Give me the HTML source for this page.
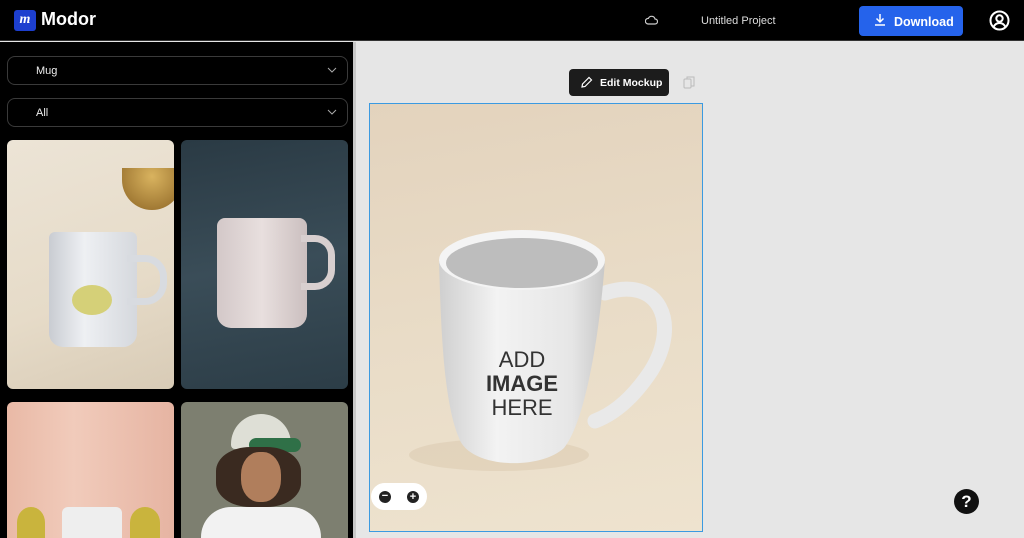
<!DOCTYPE html>
<html style="background:#e6e6e6;overflow:hidden;height:538px"><head><meta charset="utf-8"><style>
*{margin:0;padding:0;box-sizing:border-box}
body{width:1024px;height:538px;overflow:hidden;background:#e6e6e6;font-family:"Liberation Sans",sans-serif;position:relative}
.hdr{position:absolute;left:0;top:0;width:1024px;height:41px;background:#000;border-bottom:1px solid #333}
.side{position:absolute;left:0;top:42px;width:353px;height:496px;background:#000;overflow:hidden}
.strip{position:absolute;left:353px;top:42px;width:3px;height:496px;background:#c8c8c8}
.sel{position:absolute;left:7px;width:341px;height:29px;border:1px solid #3a3a3a;border-radius:8px;color:#eee;font-size:11px;padding:8px 0 0 28px}
.sel svg{position:absolute;right:10px;top:10px}
.t{position:absolute;border-radius:6px;overflow:hidden}
</style></head><body>
<div class="hdr">
 <div style="position:absolute;left:14px;top:10px;width:22px;height:21px;background:#1d3fcf;border-radius:3px;color:#fff;font:italic bold 14px 'Liberation Serif',serif;text-align:center;line-height:19px">m</div>
 <div style="position:absolute;left:41px;top:9px;color:#fff;font-size:18px;font-weight:bold">Modor</div>
 <svg style="position:absolute;left:645px;top:15px" width="13" height="10" viewBox="0 0 13 10"><path d="M3 9h7a2.5 2.5 0 0 0 0-5 3.5 3.5 0 0 0-6.6-.6A2.8 2.8 0 0 0 3 9z" fill="none" stroke="#ccc" stroke-width="1.2"/></svg>
 <div style="position:absolute;left:701px;top:15px;color:#ddd;font-size:11px">Untitled Project</div>
 <div style="position:absolute;left:859px;top:6px;width:104px;height:30px;background:#2563eb;border-radius:4px;color:#fff;font-size:12.5px;font-weight:bold;padding:9px 0 0 35px">Download</div>
 <svg style="position:absolute;left:874px;top:13px" width="12" height="13" viewBox="0 0 12 13"><path d="M6 1v8M2.5 5.5 6 9l3.5-3.5M1 12h10" fill="none" stroke="#fff" stroke-width="1.5"/></svg>
 <svg style="position:absolute;left:989px;top:10px" width="21" height="21" viewBox="0 0 21 21"><circle cx="10.5" cy="10.5" r="9" fill="none" stroke="#fff" stroke-width="2"/><circle cx="10.5" cy="8.5" r="3.2" fill="none" stroke="#fff" stroke-width="2"/><path d="M4.5 17c1.5-3 3.5-4 6-4s4.5 1 6 4" fill="none" stroke="#fff" stroke-width="2"/></svg>
</div>
<div class="side">
 <div class="sel" style="top:14px">Mug<svg width="10" height="6"><path d="M1 1l4 4 4-4" fill="none" stroke="#aaa"/></svg></div>
 <div class="sel" style="top:56px">All<svg width="10" height="6"><path d="M1 1l4 4 4-4" fill="none" stroke="#aaa"/></svg></div>
 <div class="t" style="left:7px;top:98px;width:167px;height:249px;background:linear-gradient(160deg,#ece4d6,#e6dbc8 60%,#d8cbb6)">
  <div style="position:absolute;left:115px;top:28px;width:60px;height:42px;border-radius:0 0 30px 30px;background:radial-gradient(circle at 50% 20%,#d9b35f,#8c6424)"></div>
  <div style="position:absolute;left:42px;top:92px;width:88px;height:115px;background:linear-gradient(90deg,#c9ccd2,#eef0f3 40%,#d5d8dd);border-radius:6px 6px 14px 14px"></div>
  <div style="position:absolute;left:120px;top:115px;width:40px;height:50px;border:7px solid #d8dbe0;border-radius:0 22px 22px 0;border-left:none"></div>
  <div style="position:absolute;left:65px;top:145px;width:40px;height:30px;background:#d5d078;border-radius:50%"></div>
 </div>
 <div class="t" style="left:181px;top:98px;width:167px;height:249px;background:linear-gradient(170deg,#2a3a44,#3a4d58 50%,#2c3d47)">
  <div style="position:absolute;left:36px;top:78px;width:90px;height:110px;background:linear-gradient(90deg,#d3c8c8,#e8dfde 50%,#cbbfbf);border-radius:8px 8px 14px 14px"></div>
  <div style="position:absolute;left:120px;top:95px;width:34px;height:55px;border:7px solid #d8cfcf;border-radius:0 20px 20px 0;border-left:none"></div>
 </div>
 <div class="t" style="left:7px;top:360px;width:167px;height:136px;border-radius:6px 6px 0 0;background:linear-gradient(90deg,#e9b9a6,#f1cbbb 40%,#e6b4a2)">
  <div style="position:absolute;left:55px;top:105px;width:60px;height:31px;background:#eee;border-radius:6px 6px 0 0"></div>
  <div style="position:absolute;left:10px;top:105px;width:28px;height:31px;background:#c9b43d;border-radius:50% 50% 0 0"></div>
  <div style="position:absolute;left:123px;top:105px;width:30px;height:31px;background:#c9b43d;border-radius:50% 50% 0 0"></div>
 </div>
 <div class="t" style="left:181px;top:360px;width:167px;height:136px;border-radius:6px 6px 0 0;background:#7d7f70">
  <div style="position:absolute;left:50px;top:12px;width:60px;height:35px;background:#dedfd6;border-radius:30px 30px 4px 4px"></div>
  <div style="position:absolute;left:68px;top:36px;width:52px;height:14px;background:#2f7047;border-radius:10px"></div>
  <div style="position:absolute;left:35px;top:45px;width:85px;height:60px;background:#3a2a20;border-radius:40%"></div>
  <div style="position:absolute;left:60px;top:50px;width:40px;height:50px;background:#b07e5c;border-radius:45%"></div>
  <div style="position:absolute;left:20px;top:105px;width:120px;height:31px;background:#f2f2f2;border-radius:30px 30px 0 0"></div>
 </div>
</div>
<div class="strip"></div>
<div style="position:absolute;left:569px;top:69px;width:100px;height:27px;background:#1c1c1c;border-radius:4px;color:#fff;font-size:10.5px;font-weight:bold;padding:8px 0 0 31px">Edit Mockup</div>
<svg style="position:absolute;left:580px;top:76px" width="13" height="13" viewBox="0 0 13 13"><path d="M2 11l.5-3L9 1.5l2.5 2.5L5 10.5z" fill="none" stroke="#fff" stroke-width="1.2"/></svg>
<svg style="position:absolute;left:683px;top:76px" width="12" height="14" viewBox="0 0 12 14"><rect x="1" y="3" width="7" height="9" rx="1" fill="none" stroke="#bbb"/><path d="M4 3V1h7v9H8" fill="none" stroke="#bbb"/></svg>
<svg style="position:absolute;left:625px;top:100px" width="70" height="70"><path d="M63 61 L12 13" stroke="#e8121b" stroke-width="3"/><path d="M5 6 L22 12 L12 22z" fill="#e8121b"/></svg>
<div style="position:absolute;left:369px;top:103px;width:334px;height:429px;border:1.5px solid #3b9ae1;overflow:hidden;background:linear-gradient(170deg,#e3d3bd,#e9dcc7 50%,#eee3cf)">
<svg width="334" height="429" style="position:absolute;left:-1px;top:-1px">
 <defs><linearGradient id="mb" x1="0" x2="1"><stop offset="0" stop-color="#cfcfcf"/><stop offset=".35" stop-color="#f3f3f3"/><stop offset=".8" stop-color="#e6e6e6"/><stop offset="1" stop-color="#c8c8c8"/></linearGradient></defs>
 <ellipse cx="130" cy="352" rx="90" ry="16" fill="#cdb89a" opacity=".3"/>
 <path d="M236 190 C290 172 312 220 282 268 C262 298 242 312 226 318" fill="none" stroke="#e9e9e9" stroke-width="15" stroke-linecap="round"/>
 <path d="M70 157 C72 230 75 300 90 335 C100 365 170 368 195 345 C215 320 230 240 236 157z" fill="url(#mb)"/>
 <ellipse cx="153" cy="157" rx="83" ry="30" fill="#f4f4f4"/>
 <ellipse cx="153" cy="160" rx="76" ry="25" fill="#bdbdbd"/>
 <text x="153" y="264" text-anchor="middle" font-family="Liberation Sans" font-size="22" fill="#333">ADD</text>
 <text x="153" y="288" text-anchor="middle" font-family="Liberation Sans" font-weight="bold" font-size="22" fill="#333">IMAGE</text>
 <text x="153" y="312" text-anchor="middle" font-family="Liberation Sans" font-size="22" fill="#333">HERE</text>
</svg>
<div style="position:absolute;left:1px;top:379px;width:56px;height:27px;background:#fff;border-radius:14px"></div>
<div style="position:absolute;left:9px;top:387px;width:12px;height:12px;background:#222;border-radius:50%;color:#fff;font-size:11px;line-height:11px;text-align:center;font-weight:bold">−</div>
<div style="position:absolute;left:37px;top:387px;width:12px;height:12px;background:#222;border-radius:50%;color:#fff;font-size:11px;line-height:12px;text-align:center;font-weight:bold">+</div>
</div>
<div style="position:absolute;left:954px;top:489px;width:25px;height:25px;background:#111;border-radius:50%;color:#fff;font-size:17px;font-weight:bold;text-align:center;line-height:25px">?</div>
</body></html>
